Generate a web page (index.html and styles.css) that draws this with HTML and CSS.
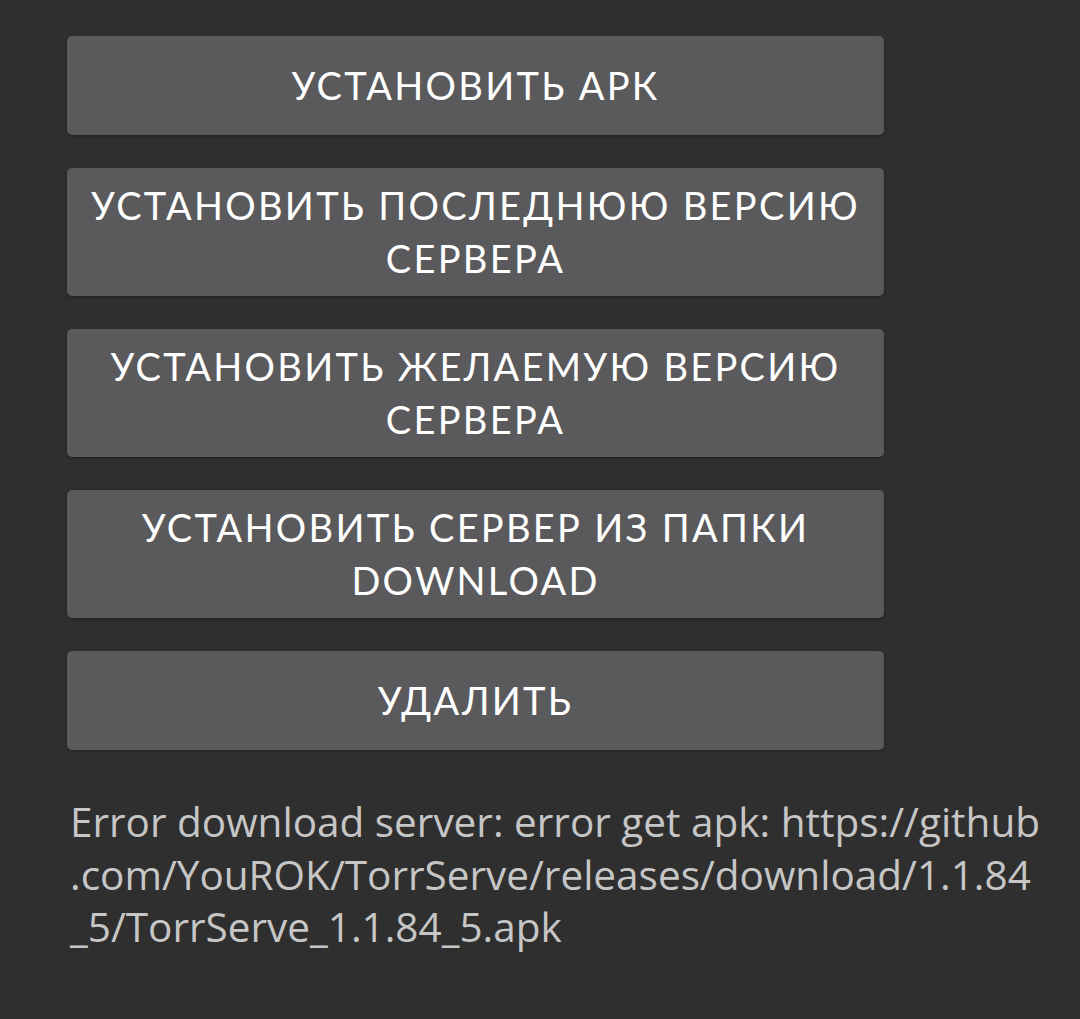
FILE: index.html
```html
<!DOCTYPE html>
<html lang="ru">
<head>
<meta charset="utf-8">
<link rel="stylesheet" href="styles.css">
</head>
<body>
<main class="panel">
  <div class="actions">
    <button class="btn">УСТАНОВИТЬ АРК</button>
    <button class="btn">УСТАНОВИТЬ ПОСЛЕДНЮЮ ВЕРСИЮ СЕРВЕРА</button>
    <button class="btn">УСТАНОВИТЬ ЖЕЛАЕМУЮ ВЕРСИЮ СЕРВЕРА</button>
    <button class="btn">УСТАНОВИТЬ СЕРВЕР ИЗ ПАПКИ DOWNLOAD</button>
    <button class="btn">УДАЛИТЬ</button>
  </div>
  <p class="error">Error download server: error get apk: https://github<br>.com/YouROK/TorrServe/releases/download/1.1.84<br>_5/TorrServe_1.1.84_5.apk</p>
</main>
</body>
</html>
```

FILE: styles.css
```css
html, body {
  margin: 0;
  padding: 0;
  background: #2f2f2f;
}
.panel {
  padding: 36px 0 0 67px;
  width: 817px;
}
.actions {
  display: flex;
  flex-direction: column;
  gap: 33px;
}
.btn {
  display: flex;
  align-items: center;
  justify-content: center;
  min-height: 99px;
  padding: 11px 20px;
  box-sizing: border-box;
  width: 817px;
  border: none;
  border-radius: 5px;
  background: #5a5a5c;
  box-shadow: 0 1px 3px rgba(0,0,0,0.35);
  color: #ffffff;
  font-family: "Lato", "Open Sans", sans-serif;
  font-size: 38px;
  line-height: 53px;
  letter-spacing: 2.3px;
  text-align: center;
}
.error {
  margin: 46px 0 0 3px;
  color: #c6c6c6;
  font-family: "Open Sans", "Lato", sans-serif;
  font-size: 40.5px;
  line-height: 52.5px;
  white-space: nowrap;
}
```
